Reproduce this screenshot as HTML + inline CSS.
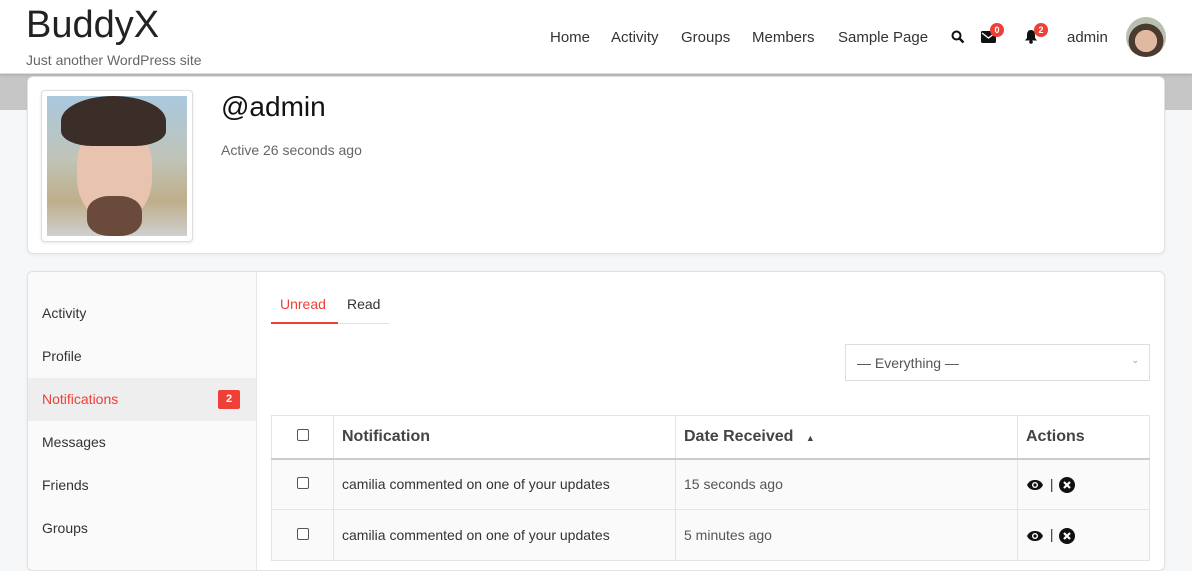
<!DOCTYPE html>
<html><head><style>
*{box-sizing:border-box;margin:0;padding:0}
body{width:1192px;height:554px;overflow:hidden;background:#f6f7f9;font-family:"Liberation Sans",sans-serif;color:#505050;position:relative}
.hdr{position:absolute;left:0;top:0;width:1192px;height:74px;background:#fff;border-bottom:1px solid #ddd;box-shadow:0 1px 3px rgba(0,0,0,.15);z-index:2}
.logo{position:absolute;left:26px;top:4px;font-size:38px;color:#222}
.tag{position:absolute;left:26px;top:52px;font-size:14px;color:#666}
.nav{position:absolute;top:29px;font-size:15px;color:#333}
.badge{position:absolute;background:#ee4036;color:#fff;font-size:9px;font-weight:bold;border-radius:50%;width:14px;height:14px;text-align:center;line-height:14px}
.band{position:absolute;left:0;top:74px;width:1192px;height:36px;background:#c6c6c6}
.card{position:absolute;left:27px;width:1138px;background:#fff;border:1px solid #e2e2e2;border-radius:6px;box-shadow:0 1px 3px rgba(0,0,0,.06)}
.photo{position:absolute;width:140px;height:140px;background:linear-gradient(180deg,#aac8de 0%,#c0c4b8 45%,#bfae8a 75%,#cfcfcf 100%);overflow:hidden}
.side a{display:block;height:43px;line-height:43px;padding-left:14px;font-size:14px;color:#333}
table{border-collapse:collapse;position:absolute;left:271px;top:415px;width:879px}
td,th{border:1px solid #e4e4e4;text-align:left;font-size:14px;color:#333;padding-left:8px}
th{height:43px;font-size:16px;font-weight:bold;color:#444}
td{height:51px;background:#fafafa}
.cb{display:inline-block;width:12px;height:12px;border:1px solid #555;border-radius:2px;background:#fff}
svg{vertical-align:middle}
</style></head><body>
<div class="hdr">
<div class="logo">BuddyX</div>
<div class="tag">Just another WordPress site</div>
<span class="nav" style="left:550px">Home</span>
<span class="nav" style="left:611px">Activity</span>
<span class="nav" style="left:681px">Groups</span>
<span class="nav" style="left:752px">Members</span>
<span class="nav" style="left:838px">Sample Page</span>
<svg style="position:absolute;left:951px;top:30px" width="14" height="14" viewBox="0 0 14 14"><circle cx="5.5" cy="5.5" r="4" fill="none" stroke="#111" stroke-width="2"/><path d="M8.5 8.5L12.5 12.5" stroke="#111" stroke-width="2.4"/></svg>
<svg style="position:absolute;left:981px;top:31px" width="15" height="12" viewBox="0 0 15 12"><rect width="15" height="12" rx="1.5" fill="#111"/><path d="M1 2L7.5 7L14 2" stroke="#fff" stroke-width="1.3" fill="none"/></svg>
<div class="badge" style="left:990px;top:23px">0</div>
<svg style="position:absolute;left:1024px;top:29px" width="14" height="15" viewBox="0 0 14 15"><path d="M7 1C4 1 3 3.5 3 6V9L1 11.5H13L11 9V6C11 3.5 10 1 7 1Z" fill="#111"/><circle cx="7" cy="13" r="1.8" fill="#111"/></svg>
<div class="badge" style="left:1034px;top:23px">2</div>
<span class="nav" style="left:1067px">admin</span>
<div style="position:absolute;left:1126px;top:17px;width:40px;height:40px;border-radius:50%;background:radial-gradient(circle at 50% 60%,#e0b9a0 0 35%,#4a3a30 36% 55%,#b8c0b0 56%)"></div>
</div>
<div class="band"></div>
<div class="card" style="top:76px;height:178px">
<div style="position:absolute;left:13px;top:13px;width:152px;height:152px;border:1px solid #ddd;border-radius:4px;background:#fff;box-shadow:0 1px 3px rgba(0,0,0,.1)">
<div class="photo" style="left:5px;top:5px">
<div style="position:absolute;left:30px;top:30px;width:75px;height:95px;border-radius:40% 40% 45% 45%;background:#e8c4b0"></div>
<div style="position:absolute;left:14px;top:0;width:105px;height:50px;border-radius:50% 50% 30% 30%;background:#3b2e28"></div>
<div style="position:absolute;left:40px;top:100px;width:55px;height:40px;border-radius:40%;background:#6a4a3a"></div>
</div></div>
<div style="position:absolute;left:193px;top:14px;font-size:28px;color:#111">@admin</div>
<div style="position:absolute;left:193px;top:65px;font-size:14px;color:#666">Active 26 seconds ago</div>
</div>
<div class="card" style="top:271px;height:300px;overflow:hidden">
<div class="side" style="position:absolute;left:0;top:0;width:229px;height:300px;background:#fafafa;border-right:1px solid #e6e6e6;padding-top:20px">
<a>Activity</a><a>Profile</a>
<a style="background:#eee;color:#ee4036;position:relative">Notifications<span style="position:absolute;left:190px;top:12px;background:#ee4036;color:#fff;font-size:11px;font-weight:bold;width:22px;height:19px;line-height:19px;text-align:center;border-radius:2px">2</span></a>
<a>Messages</a><a>Friends</a><a>Groups</a>
</div>
</div>
<div style="position:absolute;left:271px;top:296px;width:118px;height:28px;border-bottom:1px solid #e2e2e2;font-size:14px">
<span style="position:absolute;left:0;width:67px;height:28px;border-bottom:2px solid #ee4036;color:#ee4036;padding-left:9px">Unread</span>
<span style="position:absolute;left:76px;color:#333">Read</span></div>
<div style="position:absolute;left:845px;top:344px;width:305px;height:37px;border:1px solid #ddd;background:#fff;font-size:14px;color:#555;padding:10px 0 0 11px">— Everything —<span style="position:absolute;right:10px;top:10px;font-size:9px;color:#999">⌄</span></div>
<table>
<tr><th style="width:62px;text-align:center;padding:0"><span class="cb"></span></th><th style="width:342px">Notification</th><th style="width:342px">Date Received <span style="font-size:9px;margin-left:8px">▲</span></th><th>Actions</th></tr>
<tr style="border-top:2px solid #ccc"><td style="text-align:center;padding:0"><span class="cb"></span></td><td>camilia commented on one of your updates</td><td style="color:#555">15 seconds ago</td><td><svg width="18" height="12" viewBox="0 0 18 12"><path d="M1 6C3 2 6 1 9 1S15 2 17 6C15 10 12 11 9 11S3 10 1 6Z" fill="#111"/><circle cx="9" cy="6" r="3" fill="#fff"/><circle cx="9" cy="6" r="1.6" fill="#111"/></svg> <span style="margin:0 2px">|</span> <svg width="16" height="16" viewBox="0 0 16 16"><circle cx="8" cy="8" r="8" fill="#111"/><path d="M5 5L11 11M11 5L5 11" stroke="#fff" stroke-width="2.2"/></svg></td></tr>
<tr><td style="text-align:center;padding:0"><span class="cb"></span></td><td>camilia commented on one of your updates</td><td style="color:#555">5 minutes ago</td><td><svg width="18" height="12" viewBox="0 0 18 12"><path d="M1 6C3 2 6 1 9 1S15 2 17 6C15 10 12 11 9 11S3 10 1 6Z" fill="#111"/><circle cx="9" cy="6" r="3" fill="#fff"/><circle cx="9" cy="6" r="1.6" fill="#111"/></svg> <span style="margin:0 2px">|</span> <svg width="16" height="16" viewBox="0 0 16 16"><circle cx="8" cy="8" r="8" fill="#111"/><path d="M5 5L11 11M11 5L5 11" stroke="#fff" stroke-width="2.2"/></svg></td></tr>
</table>
</body></html>
